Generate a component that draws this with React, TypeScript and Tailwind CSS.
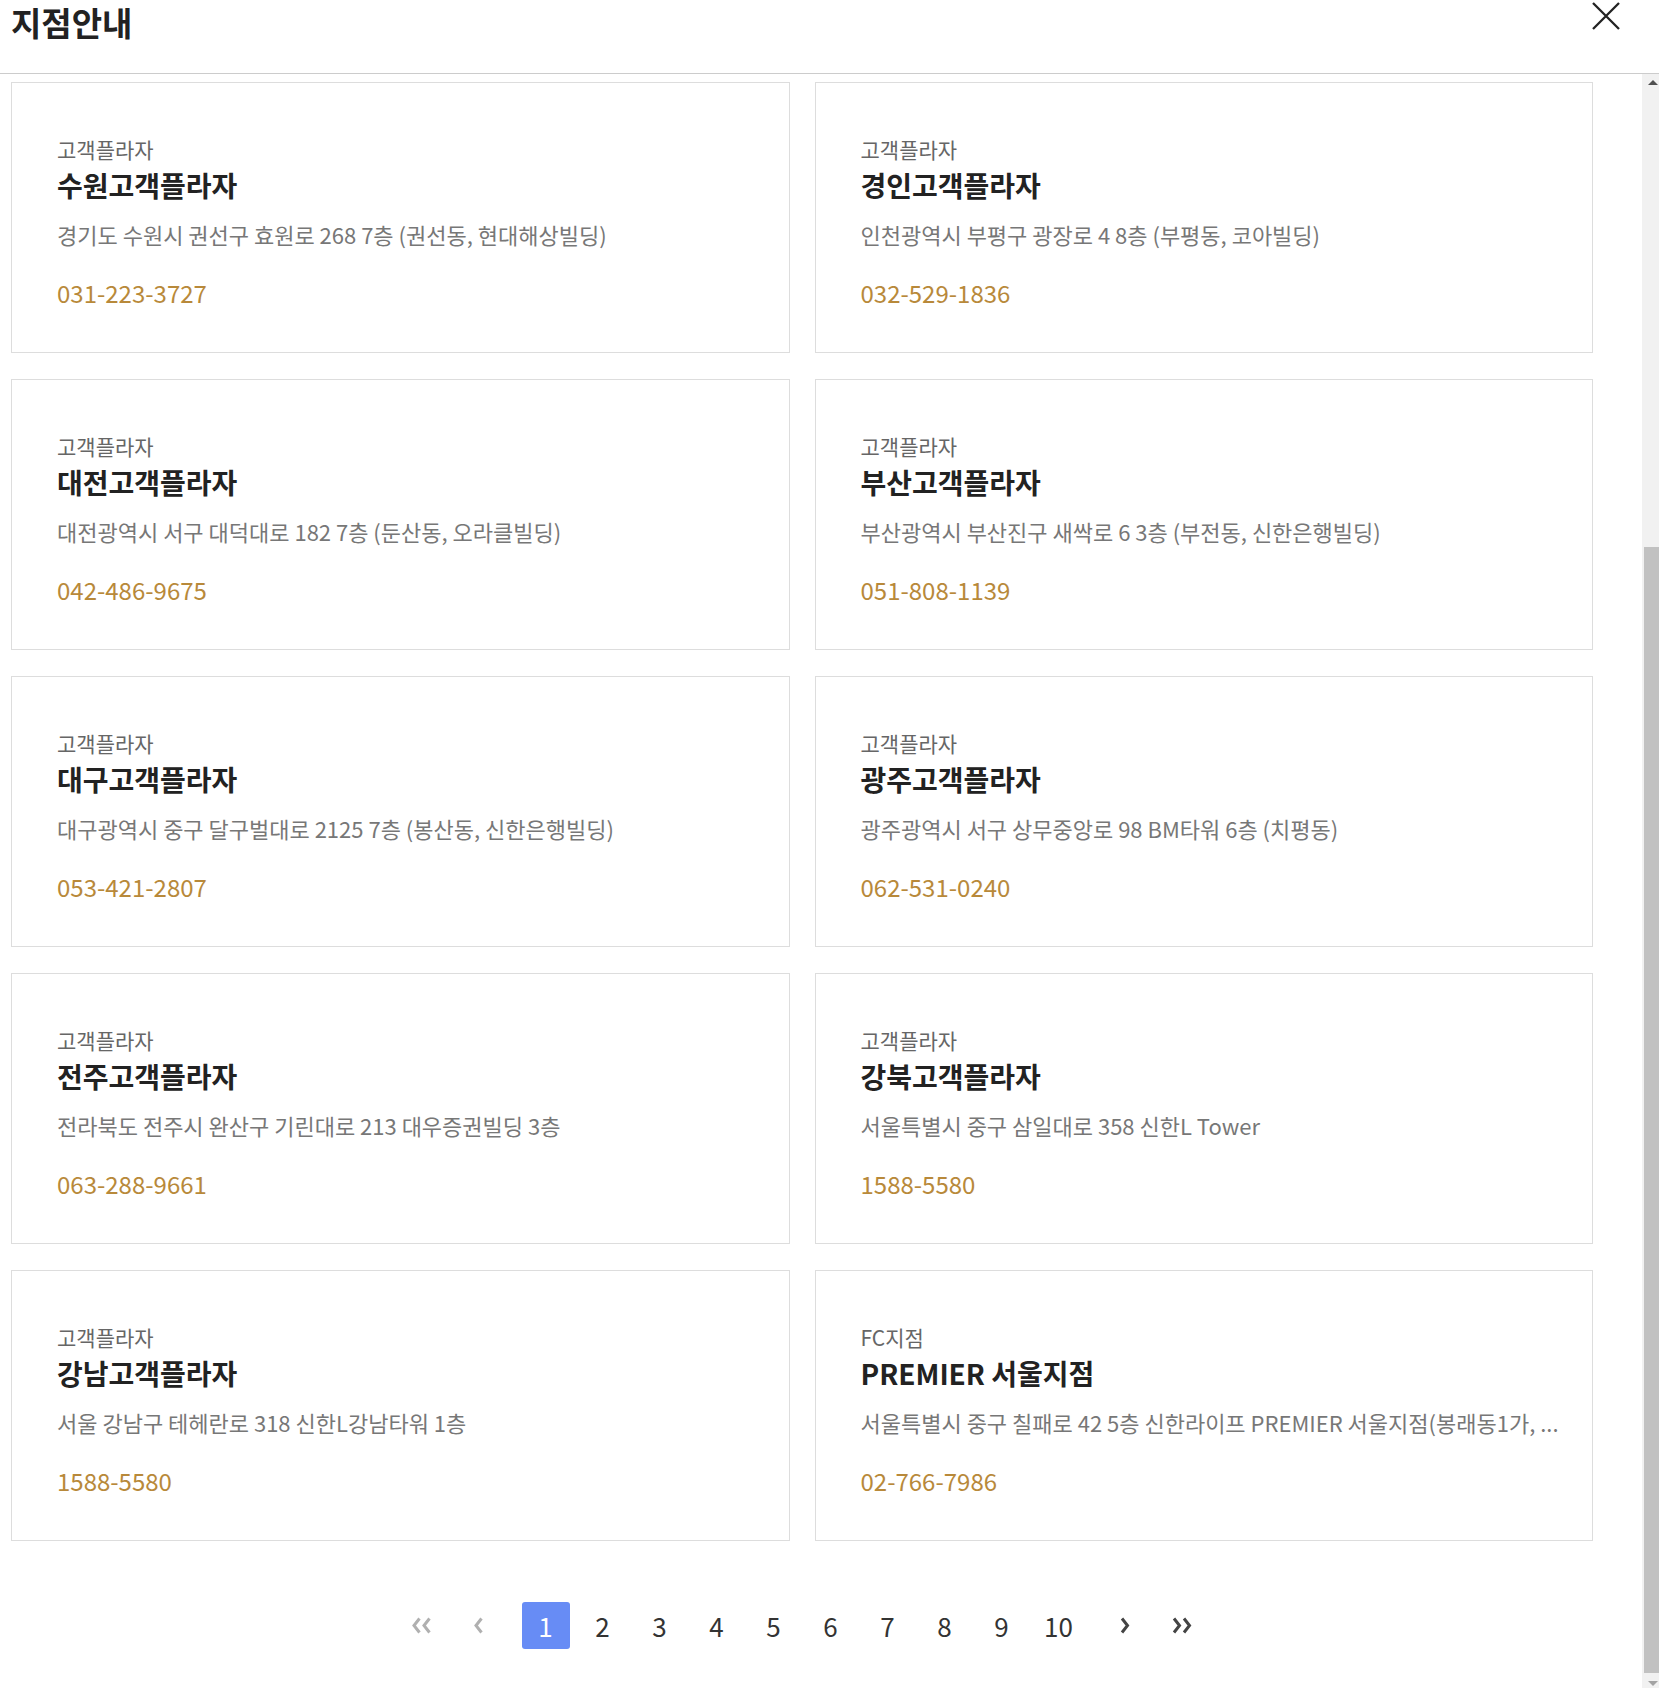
import React from "react";

// 지점 목록 (1페이지)
const BRANCHES = [
  { type: "고객플라자", name: "수원고객플라자", addr: "경기도 수원시 권선구 효원로 268 7층 (권선동, 현대해상빌딩)", tel: "031-223-3727" },
  { type: "고객플라자", name: "경인고객플라자", addr: "인천광역시 부평구 광장로 4 8층 (부평동, 코아빌딩)", tel: "032-529-1836" },
  { type: "고객플라자", name: "대전고객플라자", addr: "대전광역시 서구 대덕대로 182 7층 (둔산동, 오라클빌딩)", tel: "042-486-9675" },
  { type: "고객플라자", name: "부산고객플라자", addr: "부산광역시 부산진구 새싹로 6 3층 (부전동, 신한은행빌딩)", tel: "051-808-1139" },
  { type: "고객플라자", name: "대구고객플라자", addr: "대구광역시 중구 달구벌대로 2125 7층 (봉산동, 신한은행빌딩)", tel: "053-421-2807" },
  { type: "고객플라자", name: "광주고객플라자", addr: "광주광역시 서구 상무중앙로 98 BM타워 6층 (치평동)", tel: "062-531-0240" },
  { type: "고객플라자", name: "전주고객플라자", addr: "전라북도 전주시 완산구 기린대로 213 대우증권빌딩 3층", tel: "063-288-9661" },
  { type: "고객플라자", name: "강북고객플라자", addr: "서울특별시 중구 삼일대로 358 신한L Tower", tel: "1588-5580" },
  { type: "고객플라자", name: "강남고객플라자", addr: "서울 강남구 테헤란로 318 신한L강남타워 1층", tel: "1588-5580" },
  { type: "FC지점", name: "PREMIER 서울지점", addr: "서울특별시 중구 칠패로 42 5층 신한라이프 PREMIER 서울지점(봉래동1가, ...", tel: "02-766-7986" },
];

const PAGES = [1, 2, 3, 4, 5, 6, 7, 8, 9, 10];

function Chevron({ dir, double, color }: { dir: "l" | "r"; double?: boolean; color: string }) {
  const one = dir === "l" ? "M8.5 1.5 L3 8.5 L8.5 15.5" : "M2 1.5 L7.5 8.5 L2 15.5";
  return (
    <svg width={double ? 21 : 11} height={17} viewBox={double ? "0 0 21 17" : "0 0 11 17"} fill="none">
      <path d={one} stroke={color} strokeWidth={3} />
      {double && <path d={one} transform="translate(10 0)" stroke={color} strokeWidth={3} />}
    </svg>
  );
}

function BranchCard({ b }: { b: (typeof BRANCHES)[number] }) {
  return (
    <div className="h-[271px] border border-[#dddddd] bg-white pl-[45px] pr-[20px] pt-[52px] flex flex-col min-w-0">
      <p className="text-[21px] leading-[28px] text-[#666666]">{b.type}</p>
      <h3 className="mt-[4px] text-[28px] leading-[36px] font-bold text-[#222222]">{b.name}</h3>
      <p className="mt-[16px] text-[22px] leading-[30px] text-[#777777] whitespace-nowrap overflow-hidden text-ellipsis">
        {b.addr}
      </p>
      <p className="mt-[28px] text-[24px] leading-[32px] text-[#b8893a]">{b.tel}</p>
    </div>
  );
}

export default function App() {
  return (
    <div
      className="w-full h-[1688px] bg-white flex flex-col overflow-hidden"
      style={{ fontFamily: "'Noto Sans CJK KR', 'Noto Sans', sans-serif" }}
    >
      {/* Header */}
      <header className="h-[74px] shrink-0 border-b border-[#cccccc] flex items-start justify-between">
        <h1 className="pl-[11px] pt-[1px] text-[33px] leading-[42px] font-bold text-[#222222]">지점안내</h1>
        <button className="mt-[2px] mr-[39px]">
          <svg width="28" height="28" viewBox="0 0 28 28">
            <path d="M1 1 L27 27 M27 1 L1 27" stroke="#222222" strokeWidth="2.3" />
          </svg>
        </button>
      </header>

      <div className="flex-1 flex min-h-0">
        {/* Content */}
        <main className="flex-1 pl-[11px] pr-[49px] pt-[8px]">
          <div className="grid grid-cols-2 gap-x-[25px] gap-y-[26px]">
            {BRANCHES.map((b) => (
              <BranchCard key={b.name} b={b} />
            ))}
          </div>

          {/* Pagination */}
          <nav className="mt-[61px] flex justify-center items-center gap-[9px]">
            <span className="w-[48px] h-[47px] flex items-center justify-center">
              <Chevron dir="l" double color="#b0b0b0" />
            </span>
            <span className="w-[48px] h-[47px] mr-[10px] flex items-center justify-center">
              <Chevron dir="l" color="#b0b0b0" />
            </span>
            {PAGES.map((p) => (
              <span
                key={p}
                className={
                  p === 1
                    ? "w-[48px] h-[47px] rounded-[3px] bg-[#678cf5] text-white flex items-center justify-center text-[26px]"
                    : "w-[48px] h-[47px] flex items-center justify-center text-[26px] text-[#333333]"
                }
              >
                {p}
              </span>
            ))}
            <span className="w-[48px] h-[47px] ml-[10px] flex items-center justify-center">
              <Chevron dir="r" color="#444444" />
            </span>
            <span className="w-[48px] h-[47px] flex items-center justify-center">
              <Chevron dir="r" double color="#444444" />
            </span>
          </nav>
        </main>

        {/* Scrollbar */}
        <div className="w-[17px] shrink-0 bg-[#f1f1f1] flex flex-col">
          <div className="h-[17px] flex items-center justify-center pl-[4px]">
            <div className="w-0 h-0 border-l-[5px] border-r-[5px] border-b-[5px] border-l-transparent border-r-transparent border-b-[#505050]" />
          </div>
          <div className="h-[456px]" />
          <div className="h-[1126px] ml-[2px] bg-[#c1c1c1]" />
          <div className="flex-1 flex items-end justify-center pl-[4px] pb-[2px]">
            <div className="w-0 h-0 border-l-[5px] border-r-[5px] border-t-[5px] border-l-transparent border-r-transparent border-t-[#a3a3a3]" />
          </div>
        </div>
      </div>
    </div>
  );
}
